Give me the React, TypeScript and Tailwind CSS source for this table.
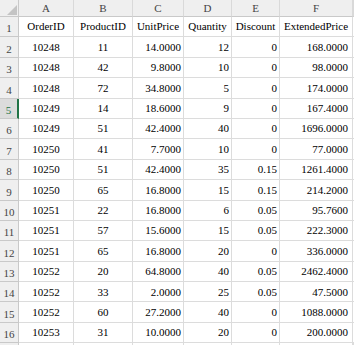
import React from "react";

const rows: string[][] = [
  ["OrderID", "ProductID", "UnitPrice", "Quantity", "Discount", "ExtendedPrice"],
  ["10248", "11", "14.0000", "12", "0", "168.0000"],
  ["10248", "42", "9.8000", "10", "0", "98.0000"],
  ["10248", "72", "34.8000", "5", "0", "174.0000"],
  ["10249", "14", "18.6000", "9", "0", "167.4000"],
  ["10249", "51", "42.4000", "40", "0", "1696.0000"],
  ["10250", "41", "7.7000", "10", "0", "77.0000"],
  ["10250", "51", "42.4000", "35", "0.15", "1261.4000"],
  ["10250", "65", "16.8000", "15", "0.15", "214.2000"],
  ["10251", "22", "16.8000", "6", "0.05", "95.7600"],
  ["10251", "57", "15.6000", "15", "0.05", "222.3000"],
  ["10251", "65", "16.8000", "20", "0", "336.0000"],
  ["10252", "20", "64.8000", "40", "0.05", "2462.4000"],
  ["10252", "33", "2.0000", "25", "0.05", "47.5000"],
  ["10252", "60", "27.2000", "40", "0", "1088.0000"],
  ["10253", "31", "10.0000", "20", "0", "200.0000"],
];

const letters = ["A", "B", "C", "D", "E", "F", ""];

export default function App() {
  return (
    <div className="h-[345px] w-[354px] overflow-hidden bg-white text-[11px] text-black font-['Liberation_Serif','Times_New_Roman',serif]">
      <div className="grid grid-cols-[19px_55px_59px_51px_48px_48px_73px_1fr] grid-rows-[17px_repeat(16,20.4px)_1fr] h-full">
        {/* corner */}
        <div className="relative bg-[#efefef] border-r border-b border-[#c9c9c9]">
          <svg className="absolute left-0 top-0" width="19" height="17" viewBox="0 0 19 17">
            <polygon points="7,15 17,15 17,5" fill="#c4c4c4" />
          </svg>
        </div>
        {letters.map((l, i) => (
          <div
            key={"h" + i}
            className="flex items-end justify-center bg-[#efefef] border-r border-b border-r-[#d9d9d9] border-b-[#c9c9c9] text-[#444] leading-[14px] pb-[1px]"
          >
            {l}
          </div>
        ))}
        {rows.map((r, ri) => (
          <React.Fragment key={"r" + ri}>
            <div
              className={
                ri === 4
                  ? "flex items-end justify-center bg-[#dcdcdc] border-b border-[#c9c9c9] border-r-2 border-r-[#217346] text-[#217346] leading-[13px] pb-[1px]"
                  : "flex items-end justify-center bg-[#efefef] border-r border-b border-[#c9c9c9] text-[#444] leading-[13px] pb-[1px]"
              }
            >
              {ri + 1}
            </div>
            {r.map((c, ci) => (
              <div
                key={"c" + ci}
                className={
                  ri === 0 || ci < 2
                    ? "flex items-center justify-center border-r border-b border-[#dcdcdc] whitespace-nowrap"
                    : ci === 5
                    ? "flex items-center justify-end pr-[4px] border-r border-b border-[#dcdcdc] whitespace-nowrap"
                    : "flex items-center justify-end pr-[2px] border-r border-b border-[#dcdcdc] whitespace-nowrap"
                }
              >
                {c}
              </div>
            ))}
            <div className="border-b border-[#dcdcdc]" />
          </React.Fragment>
        ))}
        <div className="bg-[#efefef] border-r border-[#c9c9c9]" />
        {letters.map((_, i) => (
          <div key={"e" + i} className="border-r border-[#dcdcdc]" />
        ))}
      </div>
    </div>
  );
}
